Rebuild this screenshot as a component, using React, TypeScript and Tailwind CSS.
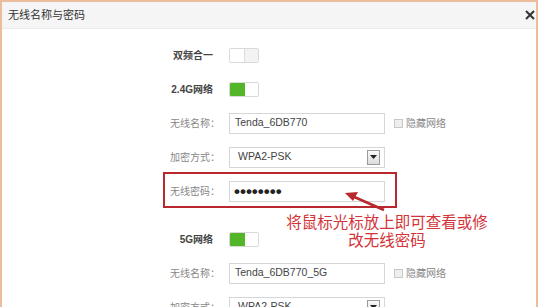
import React from 'react';

const font = { fontFamily: '"Liberation Sans", "Noto Sans CJK SC", sans-serif' };

const Toggle: React.FC<{ on?: boolean }> = ({ on }) => (
  <div className="flex h-[15px] w-[30px] overflow-hidden rounded-[2px] border border-[#d9d9d9]">
    <div className={on ? 'w-[15px] bg-[#52b628]' : 'w-[15px] border-r border-[#dcdcdc] bg-white'} />
    <div className={on ? 'flex-1 bg-white' : 'flex-1 bg-[#f3f3f3]'} />
  </div>
);

const Row: React.FC<{ label: string; strong?: boolean; h?: string; children: React.ReactNode }> = ({
  label,
  strong,
  h = 'h-[34px]',
  children,
}) => (
  <div className={`flex items-center ${h}`}>
    <div
      className={
        strong
          ? 'w-[218px] pr-[7px] text-right text-[10px] font-semibold text-[#444]'
          : 'w-[218px] text-right text-[10px] text-[#888]'
      }
    >
      {label}
    </div>
    <div className="ml-[9px] flex items-center">{children}</div>
  </div>
);

const TextBox: React.FC<{ value: string }> = ({ value }) => (
  <div className="flex h-[21px] w-[156px] items-center border border-[#d6d6d6] bg-white pl-[5px] text-[10.5px] text-[#444]">
    {value}
  </div>
);

const Select: React.FC<{ value: string }> = ({ value }) => (
  <div className="flex h-[21px] w-[156px] items-center justify-between border border-[#d6d6d6] bg-white pl-[8px] pr-[4px] text-[10.5px] text-[#444]">
    <span>{value}</span>
    <div className="flex h-[15px] w-[13px] items-center justify-center border border-[#9a9a9a] bg-gradient-to-b from-[#fafafa] to-[#dcdcdc]">
      <svg width="7" height="4" viewBox="0 0 7 4">
        <path d="M0 0h7L3.5 4z" fill="#222" />
      </svg>
    </div>
  </div>
);

const HideBox: React.FC = () => (
  <div className="ml-[9px] flex items-center gap-[3px]">
    <div className="h-[9px] w-[9px] border border-[#c8c8c8] bg-[#eeeeee]" />
    <span className="text-[10px] text-[#888]">隐藏网络</span>
  </div>
);

export default function App() {
  return (
    <div className="h-[307px] w-[540px] overflow-hidden bg-white" style={font}>
      <div className="relative h-[307px] w-[538px] border-x-2 border-t-2 border-[#ebbd9c] bg-white">
        {/* Header */}
        <div className="flex h-[27px] items-center justify-between border-b border-[#ececec] bg-[#f5f5f5] pl-[6px] pr-[1px]">
          <span className="text-[11px] text-[#333]">无线名称与密码</span>
          <svg width="10" height="10" viewBox="0 0 10 10" className="mb-[1px]">
            <path d="M1 1l8 8M9 1l-8 8" stroke="#333" strokeWidth="2" />
          </svg>
        </div>

        {/* Form */}
        <div className="pt-[9px]">
          <Row label="双频合一" strong>
            <Toggle />
          </Row>
          <Row label="2.4G网络" strong>
            <Toggle on />
          </Row>
          <Row label="无线名称：">
            <TextBox value="Tenda_6DB770" />
            <HideBox />
          </Row>
          <Row label="加密方式：">
            <Select value="WPA2-PSK" />
          </Row>
          <Row label="无线密码：">
            <div className="flex h-[21px] w-[156px] items-center border border-[#d6d6d6] bg-white pl-[4px] text-[17px] font-bold leading-none text-[#222]">
              ••••••••
            </div>
          </Row>
          <div className="mt-[15px]">
            <Row label="5G网络" strong h="h-[33px]">
              <Toggle on />
            </Row>
            <Row label="无线名称：">
              <TextBox value="Tenda_6DB770_5G" />
              <HideBox />
            </Row>
            <Row label="加密方式：">
              <Select value="WPA2-PSK" />
            </Row>
          </div>
        </div>

        {/* Annotation overlay */}
        <div className="absolute left-[161px] top-[170px] h-[36px] w-[234px] border-2 border-[#b8282c]" />
        <svg className="absolute left-[338px] top-[184px]" width="50" height="28" viewBox="0 0 50 28">
          <path d="M44 24L12 10" stroke="#b8282c" strokeWidth="2.5" />
          <path d="M5 7l13-1-5 9z" fill="#b8282c" />
        </svg>
        <div className="absolute left-[263px] top-[212px] w-[244px] text-center text-[15.5px] leading-[18px] text-[#d2343a]">
          将鼠标光标放上即可查看或修
          <br />
          改无线密码
        </div>
      </div>
    </div>
  );
}
